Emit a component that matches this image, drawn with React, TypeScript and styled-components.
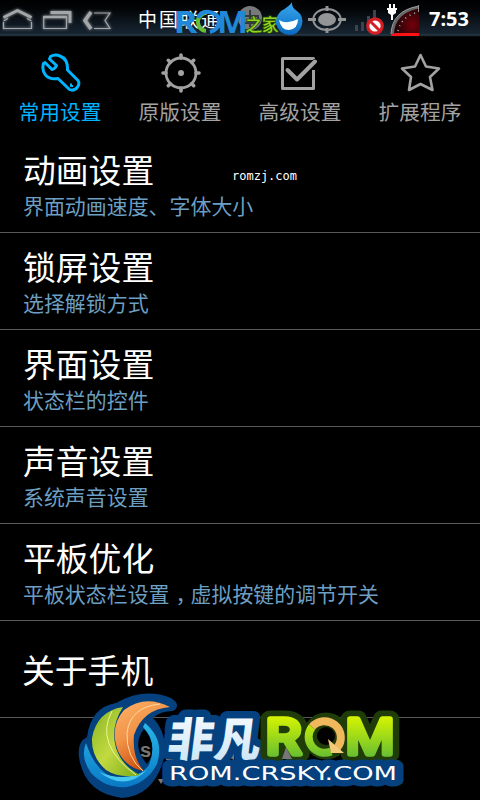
import React from 'react';
import styled, { createGlobalStyle } from 'styled-components';

const GlobalStyle = createGlobalStyle`
  body {
    margin: 0;
    background: #000;
    font-family: 'Noto Sans', 'Noto Sans CJK SC', sans-serif;
  }
`;

const Screen = styled.div`
  position: relative;
  display: flex;
  flex-direction: column;
  width: 480px;
  height: 800px;
  overflow: hidden;
  background: #000;
`;

const StatusBar = styled.header`
  position: relative;
  display: flex;
  align-items: center;
  box-sizing: border-box;
  height: 37px;
  padding: 0 9px 0 2px;
  background: linear-gradient(#000 0, #020406 8px, #172532 34px, #304150 35px, #10161c 36px, #000 37px);
`;

const NavKeys = styled.div`
  display: flex;
  width: 136px;
  height: 36px;
`;

const Carrier = styled.span`
  flex: 1;
  color: #fff;
  font: 19px/36px 'Noto Sans CJK SC', sans-serif;
  letter-spacing: 2px;
`;

const StatusIcons = styled.div`
  display: flex;
  width: 189px;
  height: 37px;
`;

const Clock = styled.span`
  width: 42px;
  margin-left: 8px;
  color: #fff;
  font: bold 20px/38px 'Noto Sans', sans-serif;
  white-space: nowrap;
`;

const Tabs = styled.nav`
  display: grid;
  grid-template-columns: repeat(4, 120px);
  height: 99px;
`;

const Tab = styled.div<{ $active?: boolean }>`
  display: flex;
  flex-direction: column;
  align-items: center;
  padding-top: 15px;
  color: ${({ $active }) => ($active ? '#00b4ff' : '#a2a2a2')};
`;

const TabLabel = styled.span`
  margin-top: 2px;
  font: 20.7px/30px 'Noto Sans CJK SC', sans-serif;
`;

const List = styled.main`
  display: flex;
  flex-direction: column;
`;

const Row = styled.section<{ $single?: boolean }>`
  display: flex;
  flex-direction: column;
  justify-content: center;
  box-sizing: border-box;
  height: 97px;
  padding: ${({ $single }) => ($single ? '0 0 0 22px' : '2px 0 0 23px')};
  border-bottom: 1px solid #585858;
`;

const Title = styled.div`
  color: #fff;
  font: 32.800px/40px 'Noto Sans CJK SC', sans-serif;
`;

const Summary = styled.div`
  color: #6c9fc2;
  font: 20.950px/32px 'Noto Sans CJK SC', sans-serif;
`;

const Comma = styled.span`
  display: inline-block;
  width: 21px;
  text-indent: 6px;
  white-space: nowrap;
`;

const SiteMark = styled.span`
  position: absolute;
  left: 232px;
  top: 169px;
  color: #fff;
  font: 12px/15px 'DejaVu Sans Mono', monospace;
`;

const HeaderLogo = styled.svg`
  position: absolute;
  left: 170px;
  top: 0;
`;

const FooterLogo = styled.svg`
  position: absolute;
  left: 70px;
  top: 690px;
`;

const rows: { title: string, summary?: React.ReactNode }[] = [
  { title: '动画设置', summary: '界面动画速度、字体大小' },
  { title: '锁屏设置', summary: '选择解锁方式' },
  { title: '界面设置', summary: '状态栏的控件' },
  { title: '声音设置', summary: '系统声音设置' },
  {
    title: '平板优化',
    summary: (
      <>
        平板状态栏设置
        <Comma>，</Comma>
        虚拟按键的调节开关
      </>
    ),
  },
  { title: '关于手机' },
];

const NavIcons = () => (
  <svg width="120" height="36" viewBox="2 0 120 36" fill="none">
    <defs>
      <filter id="glow" x="-30%" y="-50%" width="160%" height="200%">
        <feGaussianBlur stdDeviation="1.6" result="b" />
        <feMerge>
          <feMergeNode in="b" />
          <feMergeNode in="SourceGraphic" />
        </feMerge>
      </filter>
    </defs>
    <g filter="url(#glow)" stroke="#a3a7aa">
      <path d="M3.500 16.500 17.500 9.500 31.500 16.500" strokeWidth="2.600" />
      <path d="M3.500 21V27.500H31.500V21M3.500 20 8 17.500M31.500 20 27 17.500" strokeWidth="1.200" />
      <path d="M50.500 11.500H70V22" strokeWidth="2.800" />
      <path d="M43.700 15.500H66.500V27.500H43.700Z" strokeWidth="1.200" />
      <path d="M43.500 16H67" strokeWidth="2.400" />
      <path d="M91 11 85 19.500 91 28" strokeWidth="3.500" />
      <path d="M94 12H110L105 19.500 110 27.500H94" strokeWidth="1.200" />
    </g>
  </svg>
);

const StatusGlyphs = () => (
  <svg width="189" height="37" viewBox="232 0 189 37">
    <defs>
      <radialGradient id="dial" cx=".75" cy=".65" r=".7">
        <stop stopColor="#74000a" />
        <stop offset="1" stopColor="#160507" />
      </radialGradient>
    </defs>
    <circle cx="250" cy="18" r="12" fill="#77797b" />
    <path d="M250 10V27M243 16H258V23H243Z" fill="none" stroke="#333a40" strokeWidth="2" />
    <g fill="none" stroke="#929495">
      <ellipse cx="327" cy="19.500" rx="13.700" ry="10.500" strokeWidth="2" />
      <path d="M308 19.500H316M338 19.500H346M327 6V11M327 28V33" strokeWidth="3" />
      <ellipse cx="327" cy="19.500" rx="9" ry="6.500" fill="#929495" stroke="none" />
    </g>
    <path d="M355 25h3v6h-3zM361 22h3v9h-3zM367 16h3v15h-3zM373 10h3v21h-3z" fill="#39444e" />
    <circle cx="375" cy="26" r="8.800" fill="#d51f27" />
    <circle cx="375" cy="26" r="5.600" fill="#fff" />
    <path d="M370.500 21.500 379.500 30.500" stroke="#d51f27" strokeWidth="3" />
    <path d="M392 35Q394 10 419 6V35Z" fill="url(#dial)" />
    <path d="M392.500 34Q394 12 418 7.500" fill="none" stroke="#666" strokeWidth="2.600" />
    <path d="M391 34Q392 11 418 6.200M418.500 5V12" fill="none" stroke="#bbb" strokeWidth=".8" />
    <path d="M398 31Q401 17 417 12.500" fill="none" stroke="#aaa" strokeWidth="1.600" strokeDasharray="1 4" />
    <path d="M391 34.500 395 33H419V36H391Z" fill="#ff1215" />
    <path d="M389 4h2v4h2V4h2v4h2v2h-1v3l-3 2v5h-2v-5l-3-2v-3h-1V8h2z" fill="#fff" />
  </svg>
);

const WrenchIcon = () => (
  <svg width="42" height="42" viewBox="39 52 42 42" fill="none" stroke="currentColor" strokeWidth="3" strokeLinejoin="round">
    <path d="M50.500 56.500Q55 54 60 56Q68 59 67.500 70L78 80.500Q80 83.500 77.500 87Q74 91.500 69.500 89.500L58 78.500Q50 80 45.500 75Q41.500 70 43.500 63.500L45 62.500L52 69.500Q55 69 56.500 65.500L49.500 59Z" />
    <path d="M71 83.500v2.500h2" strokeWidth="2" />
  </svg>
);

const GearIcon = () => (
  <svg width="42" height="42" viewBox="159 52 42 42" fill="none" stroke="currentColor" strokeLinecap="round">
    <circle cx="181" cy="73" r="15" strokeWidth="2.800" />
    <circle cx="181" cy="73" r="3" fill="currentColor" stroke="none" />
    <path d="M181 55v3M181 88v3M163 73h3M196 73h3M168.300 60.300l2 2M191.700 83.700l2 2M168.300 85.700l2-2M191.700 62.300l2-2" strokeWidth="3.600" />
  </svg>
);

const CheckIcon = () => (
  <svg width="42" height="42" viewBox="279 52 42 42" fill="none" stroke="currentColor" strokeWidth="3" strokeLinejoin="round">
    <path d="M313.500 59V58.500H282.500V88.500H313.500V70" />
    <path d="M287.500 70 297 79.500 315 61.500" strokeWidth="4" strokeLinecap="round" />
  </svg>
);

const StarIcon = () => (
  <svg width="42" height="42" viewBox="399 52 42 42" fill="none" stroke="currentColor" strokeWidth="2.600" strokeLinejoin="round">
    <path d="M420.500 55 426 66.500 439 68.500 430 77 432.500 90 420.500 84 409 90 411 77 402 68.500 415 66.500Z" />
  </svg>
);

const RomHomeLogo = () => (
  <HeaderLogo width="136" height="40" viewBox="170 0 136 40">
    <defs>
      <linearGradient id="romBlue" x2="0" y2="1">
        <stop stopColor="#38a9ef" />
        <stop offset="1" stopColor="#0b69bf" />
      </linearGradient>
    </defs>
    <g fontFamily="Open Sans" fontWeight="700" fontSize="31" fill="#2088d8">
      <text x="173.500" y="32.500" textLength="24" lengthAdjust="spacingAndGlyphs">R</text>
      <text x="217" y="32.500" textLength="31" lengthAdjust="spacingAndGlyphs">M</text>
    </g>
    <path d="M207 12Q197 15 198 23Q199 30 206 31" fill="none" stroke="#65bf35" strokeWidth="4" />
    <path d="M198 18Q201 11 209 12Q220 14 219 23Q218 30 210 32" fill="none" stroke="#2188db" strokeWidth="4" />
    <text x="245.500" y="31" fontFamily="Noto Sans CJK SC" fontWeight="500" fontSize="16.500" fill="#8fd51e" stroke="#27420c" strokeWidth="1.600" paintOrder="stroke">之家</text>
    <path d="M292 2Q290 6 281 11Q275 17 276 24Q279 34 289 35Q299 35 302 25Q304 16 297 11Q291 7 292 2Z" fill="url(#romBlue)" />
    <path d="M279 20Q287 25 298 19Q298 29 289 30Q281 30 279 20Z" fill="#fff" />
  </HeaderLogo>
);

const CrskyLogo = () => (
  <FooterLogo width="340" height="110" viewBox="70 690 340 110">
    <defs>
      <linearGradient id="lime" x2="1" y2="1">
        <stop stopColor="#86b324" />
        <stop offset=".5" stopColor="#c2da40" />
        <stop offset="1" stopColor="#78a91a" />
      </linearGradient>
      <linearGradient id="orange" x2=".5" y2="1">
        <stop stopColor="#ffb469" />
        <stop offset=".5" stopColor="#f09348" />
        <stop offset="1" stopColor="#cc4a08" />
      </linearGradient>
      <linearGradient id="ring" x2="0" y2="1">
        <stop stopColor="#28b7e9" />
        <stop offset="1" stopColor="#0a78c5" />
      </linearGradient>
      <linearGradient id="ice" x2="0" y2="1">
        <stop stopColor="#fff" />
        <stop offset="1" stopColor="#c5e2f5" />
      </linearGradient>
      <linearGradient id="green" x2="0" y1="716" y2="757" gradientUnits="userSpaceOnUse">
        <stop stopColor="#d7f500" />
        <stop offset="1" stopColor="#67be32" />
      </linearGradient>
    </defs>
    <path d="M171 698Q182 705 173 711Q160 711 153 718Q168 733 164 758Q154 796 122 798Q84 793 79 757Q77 742 87 737Q91 707 116 703Q144 687 171 698Z" fill="#04417e" />
    <path d="M144 729Q131 746 147 764Q160 748 144 729Z" fill="#000" />
    <text x="140" y="757" fontFamily="Liberation Sans" fontWeight="700" fontSize="20" fill="#777">s</text>
    <path d="M86 743Q80 757 91 773Q106 789 127 787Q147 783 157 764Q165 740 145 723L143 727Q158 742 149 765Q139 778 120 779Q97 776 86 743Z" fill="url(#ring)" />
    <path d="M99 772Q125 783 147 770Q125 792 99 772Z" fill="#46c7ef" />
    <path d="M123 707Q97 711 92 738Q91 757 106 770Q120 779 140 775Q122 766 116 748Q110 727 123 707Z" fill="url(#lime)" />
    <path d="M170 707Q145 694 124 710Q109 727 118 751Q126 768 144 771Q132 758 134 735Q143 709 170 707Z" fill="url(#orange)" />
    <path d="M160 704Q130 707 127 733Q126 757 143 771" fill="none" stroke="#ffd9a0" strokeWidth="1" />
    <path d="M112 711Q94 744 136 775" fill="none" stroke="#edf49c" strokeWidth="1" />
    <path d="M166 755h9v5h-9zM158 779h6l-3 5zM228 757l6-7v10z" fill="#777" />
    <g transform="translate(166 757) skewX(-7)" fontFamily="Noto Sans CJK SC" fontWeight="900" fontSize="47">
      <text x="0" y="0" textLength="93" lengthAdjust="spacingAndGlyphs" fill="url(#ice)" stroke="#04417e" strokeWidth="15" strokeLinejoin="round" paintOrder="stroke">非凡</text>
    </g>
    <g fontFamily="Inter" fontSize="48" fontWeight="400" strokeLinejoin="round">
      <g fill="#203c08" stroke="#203c08" strokeWidth="17">
        <text x="265.500" y="754" textLength="36" lengthAdjust="spacingAndGlyphs">R</text>
        <circle cx="326" cy="736" r="15" />
        <text x="345.500" y="754" textLength="49" lengthAdjust="spacingAndGlyphs">M</text>
      </g>
      <path d="M282 759l4-12 6 12z" fill="#777" stroke="none" />
      <g fill="url(#green)" stroke="url(#green)" strokeWidth="5.500">
        <text x="265.500" y="754" textLength="36" lengthAdjust="spacingAndGlyphs">R</text>
        <text x="345.500" y="754" textLength="49" lengthAdjust="spacingAndGlyphs">M</text>
      </g>
    </g>
    <circle cx="326" cy="736" r="9" fill="#000" />
    <path d="M331 751.500A16 16 0 0 1 312 727" fill="none" stroke="url(#green)" strokeWidth="8" />
    <path d="M312 727A16 16 0 0 1 337 748" fill="none" stroke="#efb85d" strokeWidth="8" />
    <path d="M328 739 331 753 344 753Z" fill="#f4ca78" />
    <g fontFamily="DejaVu Sans" fontSize="19" strokeLinejoin="round">
      <text x="169" y="780" textLength="228" lengthAdjust="spacingAndGlyphs" stroke="#04417e" strokeWidth="13" fill="#fff" paintOrder="stroke">ROM.CRSKY.COM</text>
    </g>
  </FooterLogo>
);

const App: React.FC = () => (
  <>
    <GlobalStyle />
    <Screen>
      <StatusBar>
        <NavKeys><NavIcons /></NavKeys>
        <Carrier>中国联通</Carrier>
        <StatusIcons><StatusGlyphs /></StatusIcons>
        <Clock>7:53</Clock>
        <RomHomeLogo />
      </StatusBar>
      <Tabs>
        <Tab $active>
          <WrenchIcon />
          <TabLabel>常用设置</TabLabel>
        </Tab>
        <Tab>
          <GearIcon />
          <TabLabel>原版设置</TabLabel>
        </Tab>
        <Tab>
          <CheckIcon />
          <TabLabel>高级设置</TabLabel>
        </Tab>
        <Tab>
          <StarIcon />
          <TabLabel>扩展程序</TabLabel>
        </Tab>
      </Tabs>
      <List>
        {rows.map(({ title, summary }) => (
          <Row key={title} $single={!summary}>
            <Title>{title}</Title>
            {summary && <Summary>{summary}</Summary>}
          </Row>
        ))}
      </List>
      <SiteMark>romzj.com</SiteMark>
      <CrskyLogo />
    </Screen>
  </>
);

export default App;
